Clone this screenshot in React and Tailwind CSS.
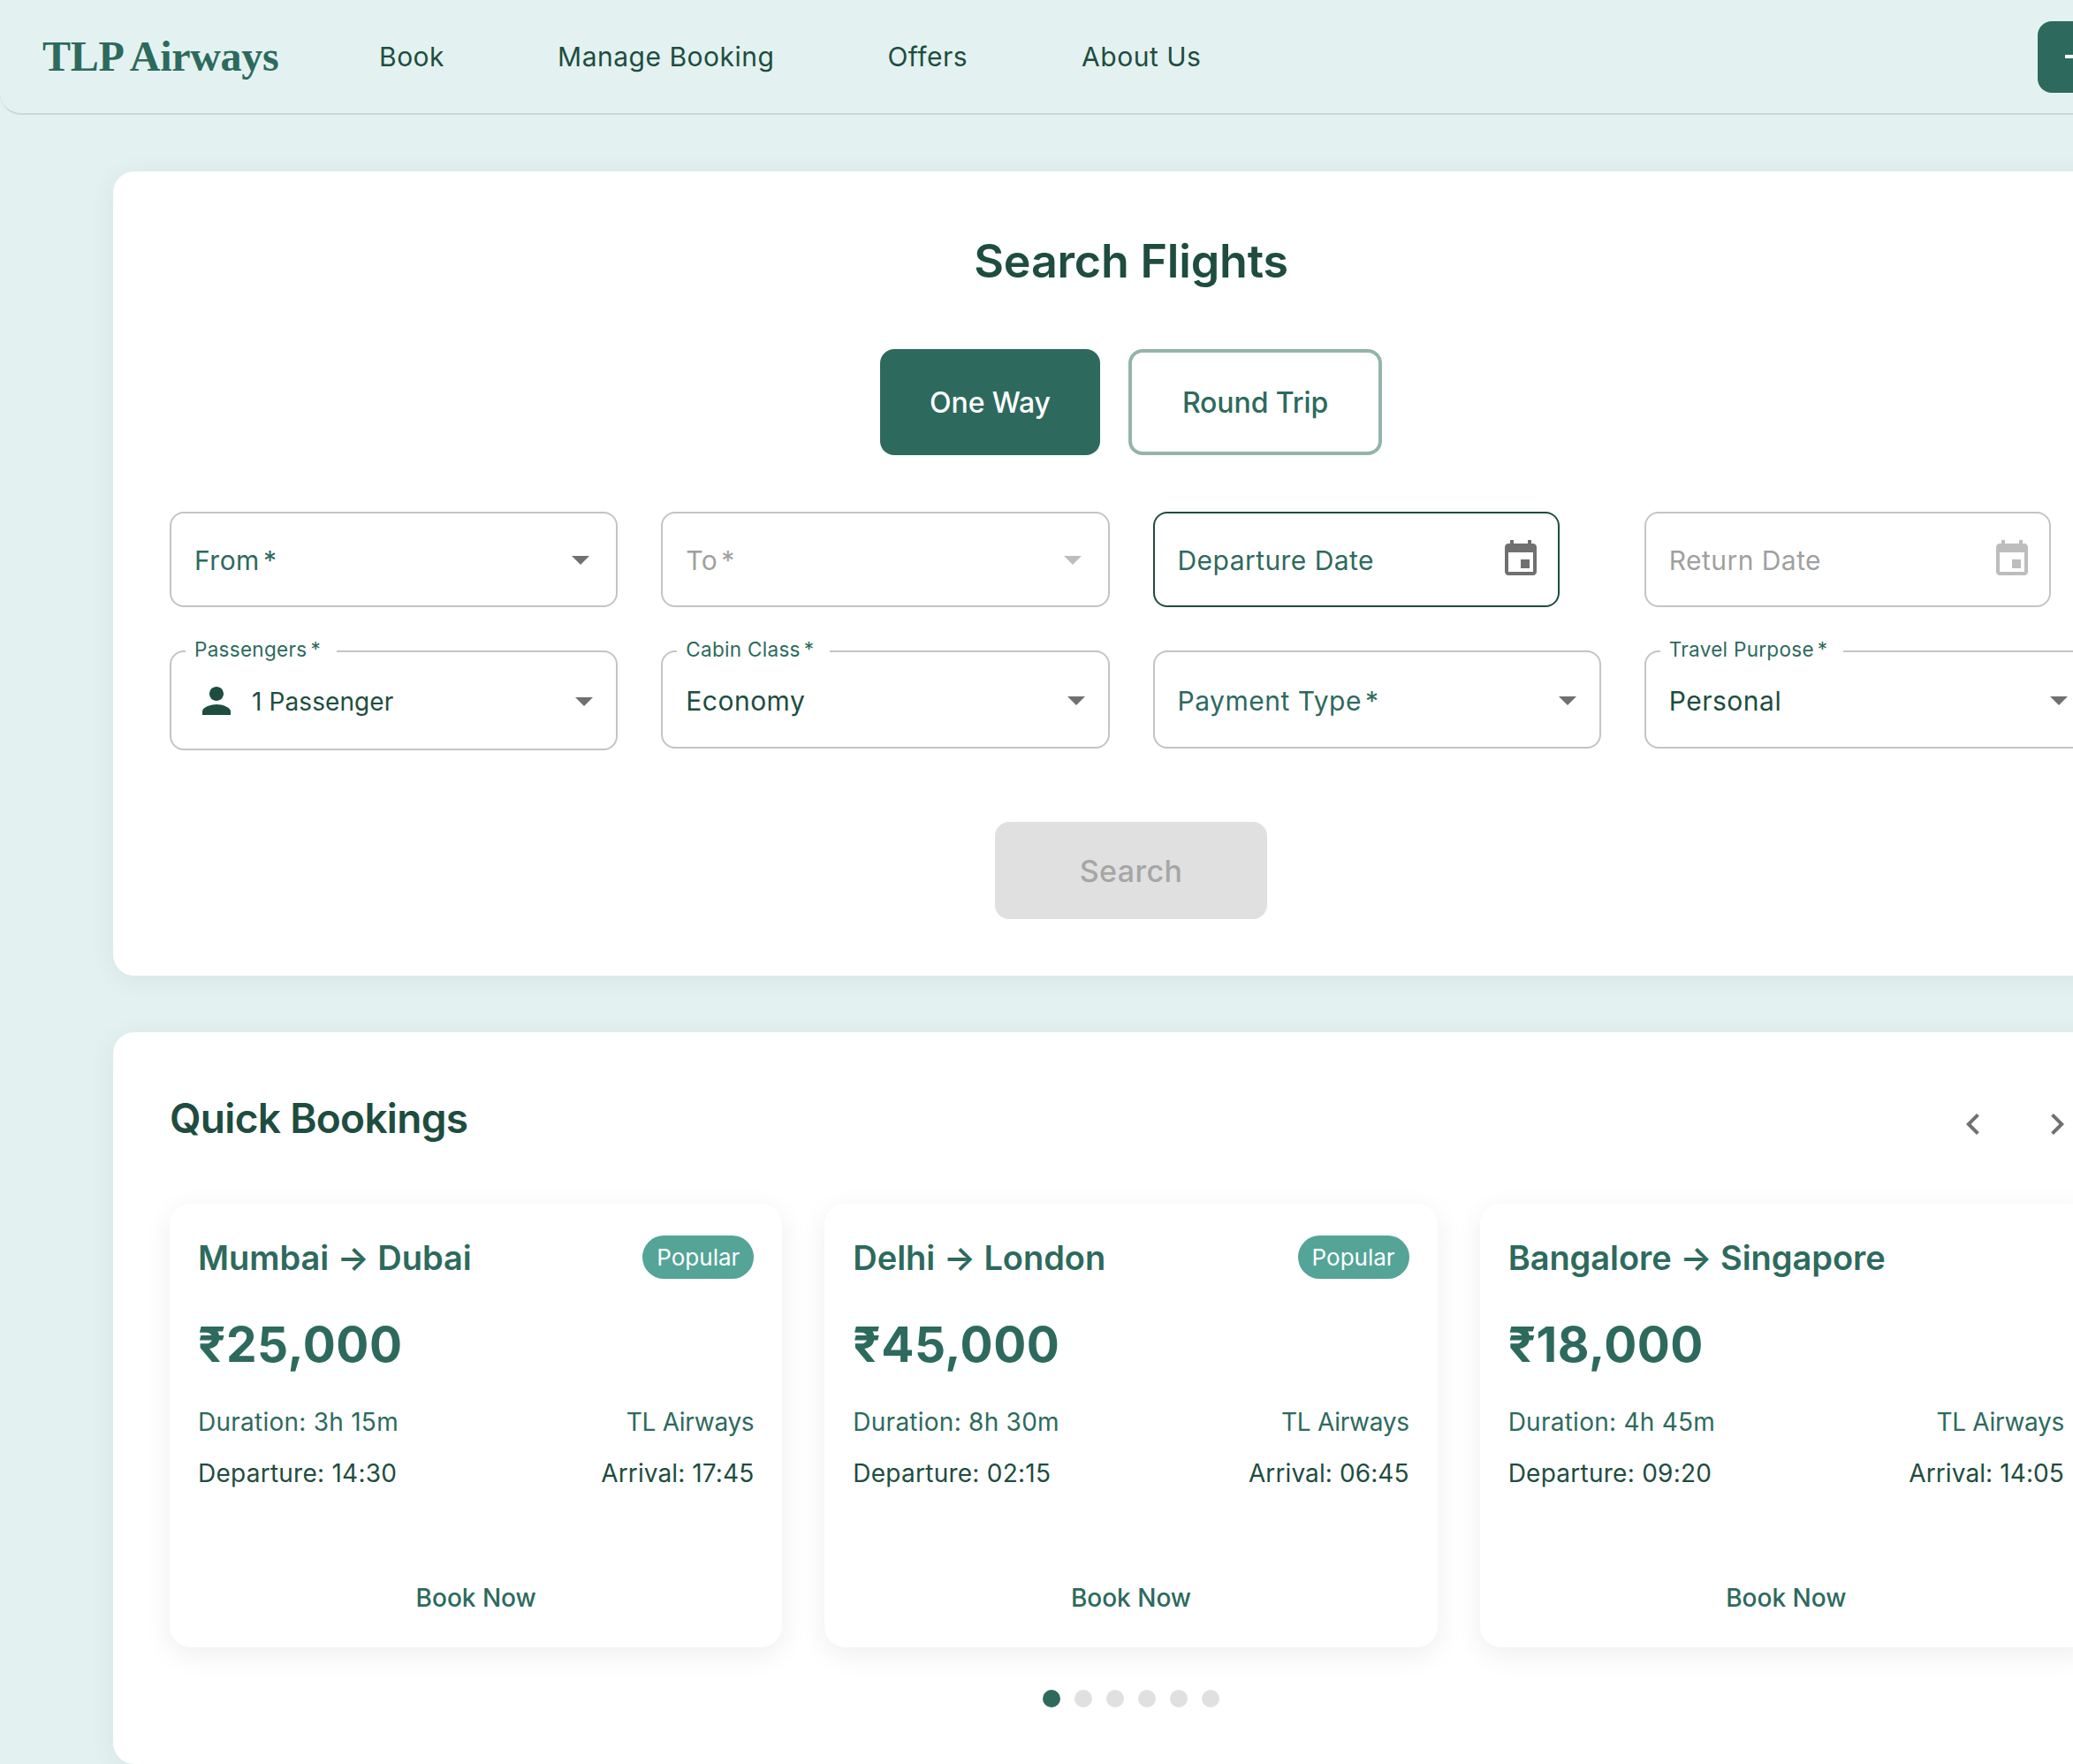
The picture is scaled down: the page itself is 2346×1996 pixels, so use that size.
function Icon({ d, className }) {
  return (
    <svg viewBox="0 0 24 24" className={className} fill="currentColor" aria-hidden="true">
      <path d={d} />
    </svg>
  );
}

const ARROW = 'M7 10l5 5 5-5z';
const EVENT = 'M17 12h-5v5h5v-5zM16 1v2H8V1H6v2H5c-1.11 0-1.99.9-1.99 2L3 19c0 1.1.89 2 2 2h14c1.1 0 2-.9 2-2V5c0-1.1-.9-2-2-2h-1V1h-2zm3 18H5V8h14v11z';
const PERSON = 'M12 12c2.21 0 4-1.79 4-4s-1.79-4-4-4-4 1.79-4 4 1.79 4 4 4zm0 2c-2.67 0-8 1.34-8 4v2h16v-2c0-2.66-5.33-4-8-4z';

function Req({ text }) {
  return (
    <>
      {text}
      <span className="ml-[4px]">*</span>
    </>
  );
}

function SelectField({ label, value, placeholder, icon, tall }) {
  const height = tall ? 'h-[113px]' : 'h-[111px]';
  return (
    <div className={`relative flex ${height} items-center rounded-[16px] border-2 border-[#c4c4c4] bg-white pl-[26px] pr-[12px]`}>
      {label && (
        <span className="absolute -top-[19px] left-[16px] bg-white pl-[10px] pr-[18px] text-[22.5px] leading-[32px] tracking-[0.3px] text-[#2d6a5d]">
          <Req text={label} />
        </span>
      )}
      {icon}
      <span className={`flex-1 pt-[2px] ${icon ? 'text-[28px] tracking-[0.1px]' : 'text-[30px] tracking-[0.5px]'} leading-[40px] ${value ? 'text-[#1e4d40]' : 'text-[#2d6a5d]'}`}>
        {value || <Req text={placeholder} />}
      </span>
      <Icon d={ARROW} className="h-[48px] w-[48px] text-[#707070]" />
    </div>
  );
}

function PlaceholderSelect({ text, disabled }) {
  return (
    <div className="flex h-[108px] items-center rounded-[16px] border-2 border-[#c4c4c4] bg-white pl-[26px] pr-[16px]">
      <span className={`flex-1 pt-[2px] text-[30px] leading-[40px] tracking-[0.5px] ${disabled ? 'text-[#a0a0a0]' : 'text-[#2d6a5d]'}`}>
        <Req text={text} />
      </span>
      <Icon d={ARROW} className={`h-[48px] w-[48px] ${disabled ? 'text-[#bdbdbd]' : 'text-[#707070]'}`} />
    </div>
  );
}

function DateField({ text, active }) {
  return (
    <div className={`flex h-[108px] w-[460px] items-center rounded-[16px] border-2 bg-white pl-[26px] pr-[18px] ${active ? 'border-[#1e4d40]' : 'border-[#c4c4c4]'}`}>
      <span className={`flex-1 pt-[2px] text-[30px] leading-[40px] tracking-[0.45px] ${active ? 'text-[#2d6a5d]' : 'text-[#a0a0a0]'}`}>{text}</span>
      <Icon d={EVENT} className={`h-[48px] w-[48px] ${active ? 'text-[#707070]' : 'text-[#bdbdbd]'}`} />
    </div>
  );
}

function BookingCard({ route, price, duration, departure, arrival, popular }) {
  return (
    <div className="flex h-[502px] flex-col rounded-[24px] bg-white px-[32px] pb-[32px] pt-[36px] shadow-[0_8px_32px_rgba(0,0,0,0.07)]">
      <div className="flex h-[49px] items-center justify-between">
        <span className="text-[38px] font-semibold leading-[48px] tracking-[-0.05px] text-[#2d6a5d]">{route}</span>
        {popular && (
          <span className="flex h-[49px] items-center rounded-full bg-[#54a498] px-[16px] text-[26px] text-white">Popular</span>
        )}
      </div>
      <div className="mt-[36px] text-[55px] font-bold leading-[76px] tracking-[0.5px] text-[#2d6a5d]">{price}</div>
      <div className="mt-[29px] flex justify-between text-[28px] leading-[42px] tracking-[0.25px] text-[#2d6a5d]">
        <span>Duration: {duration}</span>
        <span className="tracking-[-0.3px]">TL Airways</span>
      </div>
      <div className="mt-[16px] flex justify-between text-[28px] leading-[42px] tracking-[0.25px] text-[#1e4d40]">
        <span>Departure: {departure}</span>
        <span className="tracking-[0.1px]">Arrival: {arrival}</span>
      </div>
      <button className="mt-auto h-[48px] text-center text-[28px] font-medium leading-[48px] text-[#2d6a5d]">Book Now</button>
    </div>
  );
}

export default function App() {
  return (
    <div className="h-[1996px] w-[2346px] overflow-hidden bg-[#e3f2f0] font-['Inter',sans-serif]">
      <div className="w-[2560px]">
        <nav className="flex h-[130px] items-center rounded-bl-[24px] border-b-2 border-[#c8d9d7] pl-[48px] pr-[48px]">
          <span className="w-[381px] font-['Liberation_Serif',serif] text-[48px] font-bold leading-[56px] tracking-[-0.3px] text-[#2d6a5d]">TLP Airways</span>
          <div className="flex gap-[128px] text-[30px] leading-[40px] tracking-[0.5px] text-[#1e4d40]">
            <span>Book</span>
            <span>Manage Booking</span>
            <span>Offers</span>
            <span className="ml-[1px]">About Us</span>
          </div>
          <button className="ml-auto flex h-[81px] w-[206px] items-center rounded-[16px] bg-[#2d6a5d] pl-[31px] text-white">
            <span className="h-[4px] w-[120px] bg-white" />
          </button>
        </nav>

        <main className="px-[128px] pt-[64px]">
          <section className="rounded-[24px] bg-white px-[64px] pb-[64px] pt-[64px] shadow-[0_4px_32px_rgba(0,0,0,0.06)]">
            <h1 className="text-center text-[52px] font-semibold leading-[76px] tracking-[-0.2px] text-[#1e4d40]">Search Flights</h1>
            <div className="mt-[61px] flex justify-center gap-[32px]">
              <button className="h-[120px] w-[249px] rounded-[16px] bg-[#2d6a5d] pt-[2px] text-[32px] font-medium tracking-[-0.1px] text-white">One Way</button>
              <button className="h-[120px] w-[287px] rounded-[16px] border-4 border-[#94b4aa] bg-white pt-[2px] text-[32px] font-medium tracking-[-0.1px] text-[#2d6a5d]">Round Trip</button>
            </div>

            <div className="mt-[64px] grid grid-cols-4 items-start gap-x-[49px]">
              <PlaceholderSelect text="From" />
              <PlaceholderSelect text="To" disabled />
              <DateField text="Departure Date" active />
              <DateField text="Return Date" />
            </div>

            <div className="mt-[49px] grid grid-cols-4 items-start gap-x-[49px]">
              <SelectField
                label="Passengers"
                value="1 Passenger"
                tall
                icon={<Icon d={PERSON} className="ml-[1px] mr-[16px] h-[48px] w-[48px] text-[#1e4d40]" />}
              />
              <SelectField label="Cabin Class" value="Economy" />
              <SelectField placeholder="Payment Type" />
              <SelectField label="Travel Purpose" value="Personal" />
            </div>

            <div className="mt-[81px] flex justify-center">
              <button className="h-[110px] w-[308px] rounded-[16px] bg-[#e0e0e0] text-[34px] font-medium tracking-[0.4px] text-[#a6a6a6]">Search</button>
            </div>
          </section>

          <section className="mt-[64px] rounded-[24px] bg-white px-[64px] pb-[64px] pt-[64px] shadow-[0_4px_32px_rgba(0,0,0,0.06)]">
            <div className="flex items-start justify-between">
              <h2 className="-mt-[1px] text-[46px] font-semibold leading-[68px] tracking-[-0.7px] text-[#1e4d40]">Quick Bookings</h2>
              <div className="flex gap-[15px] text-[#707070]">
                <button className="flex h-[80px] w-[80px] items-center justify-center">
                  <Icon d="M15.41 7.41 14 6l-6 6 6 6 1.41-1.41L10.83 12z" className="h-[48px] w-[48px]" />
                </button>
                <button className="flex h-[80px] w-[80px] items-center justify-center">
                  <Icon d="M10 6 8.59 7.41 13.17 12l-4.58 4.59L10 18l6-6z" className="h-[48px] w-[48px]" />
                </button>
              </div>
            </div>
            <div className="mt-[50px] grid grid-cols-3 gap-[48px]">
              <BookingCard route="Mumbai → Dubai" price="₹25,000" duration="3h 15m" departure="14:30" arrival="17:45" popular />
              <BookingCard route="Delhi → London" price="₹45,000" duration="8h 30m" departure="02:15" arrival="06:45" popular />
              <BookingCard route="Bangalore → Singapore" price="₹18,000" duration="4h 45m" departure="09:20" arrival="14:05" />
            </div>
            <div className="mt-[48px] flex justify-center gap-[16px]">
              <span className="h-[20px] w-[20px] rounded-full bg-[#2d6a5d]" />
              <span className="h-[20px] w-[20px] rounded-full bg-[#e0e0e0]" />
              <span className="h-[20px] w-[20px] rounded-full bg-[#e0e0e0]" />
              <span className="h-[20px] w-[20px] rounded-full bg-[#e0e0e0]" />
              <span className="h-[20px] w-[20px] rounded-full bg-[#e0e0e0]" />
              <span className="h-[20px] w-[20px] rounded-full bg-[#e0e0e0]" />
            </div>
          </section>
        </main>
      </div>
    </div>
  );
}
